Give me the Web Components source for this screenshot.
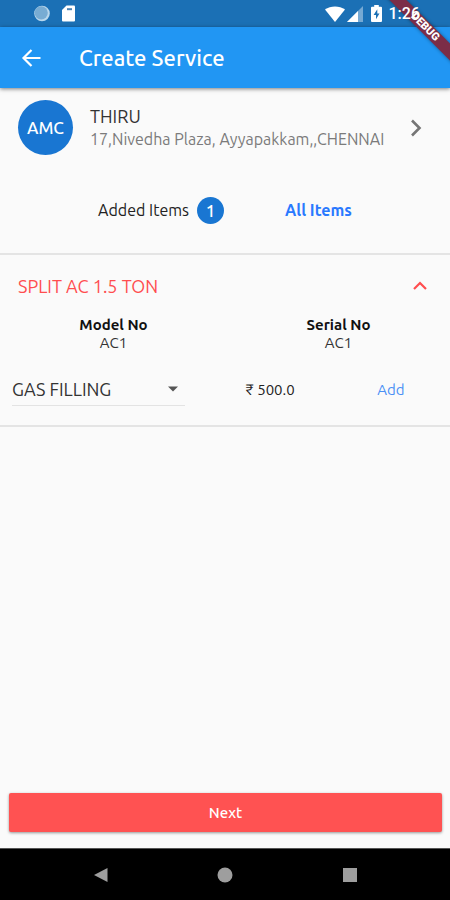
<!DOCTYPE html>
<html lang="en">
<head>
<meta charset="utf-8">
<meta name="viewport" content="width=device-width, initial-scale=1">
<title>Create Service</title>
<style>
  html, body { margin: 0; }
  body { font-family: Ubuntu, "Noto Sans", sans-serif; color: #222; background: #fafafa; }
</style>
</head>
<body>
<service-screen></service-screen>
<script>
const define = (name, html) => {
  const template = document.createElement('template');
  template.innerHTML = `<style>
    *, *::before, *::after { box-sizing: border-box; }
    :host { box-sizing: border-box; white-space: nowrap; }
    button, select, a { font: inherit; color: inherit; background: none; border: 0; padding: 0; margin: 0; text-decoration: none; cursor: pointer; }
    svg { display: block; }
  </style>` + html;
  customElements.define(name, class extends HTMLElement {
    constructor() {
      super();
      this.attachShadow({ mode: 'open' }).append(template.content.cloneNode(true));
    }
  });
};

define('status-bar', `<style>
  :host { display: flex; align-items: center; height: 27px; padding: 0 30px 0 34px; background: #1b70b5; color: #fff; font: 500 16px/20px Roboto, sans-serif; }
  .gap { flex: 1; }
  .sd { margin-left: 12px; }
  .bat { margin: 0 7px 0 8px; }
  .sig { margin-left: 2px; }
  .time { position: relative; z-index: 2; }
</style>
<svg width="16" height="17" viewBox="0 0 16 17"><circle cx="8" cy="8.5" r="7.8" fill="#b9d7ec"/><circle cx="7.2" cy="7.8" r="6.6" fill="#78acd3"/></svg>
<svg class="sd" width="13" height="17" viewBox="0 0 13 17"><path d="M4.5.5H12a1 1 0 0 1 1 1v14a1 1 0 0 1-1 1H1a1 1 0 0 1-1-1V5z" fill="#fff"/><path d="M5 3.2h5v2H5z" fill="#4a83b5"/></svg>
<span class="gap"></span>
<svg width="20" height="16" viewBox="0 0 20 16"><path d="M0 3.6C5.600-.7 14.400-.7 20 3.600L10 16z" fill="#fff"/></svg>
<svg class="sig" width="16" height="16" viewBox="0 0 16 16"><path d="M16 0V16H0z" fill="#76a9d3"/><path d="M11 5V16H0z" fill="#fff"/></svg>
<svg class="bat" width="11" height="17" viewBox="0 0 11 17"><path d="M3.200 0h4.600v1.800H10a1 1 0 0 1 1 1V16a1 1 0 0 1-1 1H1a1 1 0 0 1-1-1V2.800a1 1 0 0 1 1-1h2.200z" fill="#fff"/><path d="M6.300 4.300 2.600 10H5v4.300L8.500 8.500H6.300z" fill="#1b70b5"/></svg>
<span class="time"><slot></slot></span>`);

define('debug-ribbon', `<style>
  :host { position: absolute; top: 0; right: 0; width: 70px; height: 70px; overflow: hidden; pointer-events: none; }
  span { position: absolute; left: -15px; top: 21px; width: 120px; height: 12px; transform: rotate(45deg); text-align: center; background: #7b2d47; box-shadow: 0 0 4px rgba(0,0,0,.4); color: #fff; font: 900 11px/12px Roboto, sans-serif; }
</style><span><slot></slot></span>`);

define('app-bar', `<style>
  :host { display: flex; align-items: center; gap: 37px; height: 61px; padding: 0 20px; background: #2196f3; color: #fff; box-shadow: 0 1px 4px rgba(0,0,0,.5); }
  h1 { margin: 0; font-size: 22px; line-height: 28px; font-weight: 500; }
</style>
<button aria-label="Back"><svg width="22" height="20" viewBox="0 0 22 20" fill="none" stroke="#fff" stroke-width="2.200"><path d="M20.500 10H4M11.500 2 3.500 10l8 8"/></svg></button>
<h1><slot></slot></h1>`);

define('customer-row', `<style>
  :host { display: flex; align-items: center; gap: 17px; padding: 12px 24px 12px 18px; }
  .avatar { flex: none; display: grid; place-items: center; width: 55px; height: 55px; border-radius: 50%; background: #1976d2; color: #fff; font-size: 17px; font-weight: 500; }
  .text { flex: 1; min-width: 0; }
  .name { font-size: 18px; line-height: 23px; color: #333; }
  .addr { font-size: 16px; line-height: 22px; color: #7b7b7b; }
</style>
<div class="avatar"><slot name="tag"></slot></div>
<div class="text"><div class="name"><slot name="name"></slot></div><div class="addr"><slot></slot></div></div>
<button aria-label="Open customer"><svg width="20" height="20" viewBox="0 0 20 20" fill="none" stroke="#757575" stroke-width="2.600"><path d="m6 2.500 7.500 7.500L6 17.500"/></svg></button>`);

define('item-tabs', `<style>
  :host { display: grid; grid-template-columns: 1fr 1fr; align-items: center; padding: 30px 32px 29px; border-bottom: 2px solid #e4e4e4; font-size: 16px; line-height: 27px; }
  button { display: flex; align-items: center; justify-content: center; gap: 8px; }
  .added { justify-content: end; padding-right: 1px; }
  .all { color: #2979ff; font-weight: 700; padding-right: 6px; }
  .badge { width: 27px; height: 27px; border-radius: 50%; background: #1976d2; color: #fff; font-size: 17px; font-weight: 500; text-align: center; }
</style>
<button class="added"><slot name="added"></slot><span class="badge"><slot name="count"></slot></span></button>
<button class="all"><slot name="all"></slot></button>`);

define('service-item', `<style>
  :host { display: block; padding: 19px 0 19px; border-bottom: 2px solid #e4e4e4; }
  header { display: flex; align-items: center; justify-content: space-between; padding: 0 22px 0 18px; color: #ff4d4f; }
  h2 { margin: 0; font-size: 18px; line-height: 24px; font-weight: 400; }
  dl { display: grid; grid-template-columns: 1fr 1fr; margin: 18px 0 0; text-align: center; font-size: 15px; line-height: 18px; color: #333; }
  dt { font-weight: 700; color: #111; }
  dd { margin: 0; }
  .serial, .model { padding-left: 2px; }
  .row { display: grid; grid-template-columns: 173fr 170fr 72fr; align-items: center; margin-top: 20px; padding: 0 23px 0 12px; font-size: 15px; }
  .pick { display: grid; align-items: center; border-bottom: 1px solid #e3e3e3; font-size: 18px; }
  .pick > * { grid-area: 1 / 1; }
  select { appearance: none; width: 100%; height: 33px; color: #333; }
  .pick svg { justify-self: end; margin-right: 7px; pointer-events: none; }
  .price { text-align: center; }
  .add { color: #4a90f5; }
</style>
<header><h2><slot name="title"></slot></h2><button aria-label="Collapse"><svg width="16" height="12" viewBox="0 0 16 12" fill="none" stroke="#ff4d4f" stroke-width="2.200"><path d="m2 9 6-6 6 6"/></svg></button></header>
<dl>
  <div class="model"><dt>Model No</dt><dd><slot name="model"></slot></dd></div>
  <div class="serial"><dt>Serial No</dt><dd><slot name="serial"></slot></dd></div>
</dl>
<div class="row">
  <div class="pick"><select aria-label="Service type"><option>GAS FILLING</option></select>
  <svg width="10" height="6" viewBox="0 0 10 6"><path d="M0 .5h10L5 5.500z" fill="#555"/></svg></div>
  <span class="price"><slot name="price"></slot></span>
  <button class="add">Add</button>
</div>`);

define('primary-button', `<style>
  :host { display: block; padding: 0 8px 16px 9px; }
  button { width: 100%; height: 39px; border-radius: 2px; background: #ff5252; color: #fff; font-size: 15px; font-weight: 500; box-shadow: 0 1px 3px rgba(0,0,0,.4); }
</style><button><slot></slot></button>`);

define('nav-bar', `<style>
  :host { display: flex; align-items: center; justify-content: space-between; height: 52px; padding: 0 92px; background: #000; border-top: 1px solid #555; }
  button { display: block; }
</style>
<button aria-label="Back"><svg width="16" height="16" viewBox="0 0 16 16"><path d="M15.500 1v14L2 8z" fill="#9e9e9e"/></svg></button>
<button aria-label="Home"><svg width="16" height="16" viewBox="0 0 16 16"><circle cx="8" cy="8" r="7.500" fill="#9e9e9e"/></svg></button>
<button aria-label="Recent apps"><svg width="16" height="16" viewBox="0 0 16 16"><path d="M1 1h14v14H1z" fill="#9e9e9e"/></svg></button>`);

define('service-screen', `<style>
  :host { position: relative; display: flex; flex-direction: column; min-height: 100vh; overflow: hidden; }
  main { flex: 1; }
</style>
<status-bar>1:26</status-bar>
<app-bar>Create Service</app-bar>
<main>
  <customer-row><span slot="tag">AMC</span><span slot="name">THIRU</span>17,Nivedha Plaza, Ayyapakkam,,CHENNAI</customer-row>
  <item-tabs><span slot="added">Added Items</span><span slot="count">1</span><span slot="all">All Items</span></item-tabs>
  <service-item><span slot="title">SPLIT AC 1.5 TON</span><span slot="model">AC1</span><span slot="serial">AC1</span><span slot="price">₹ 500.0</span></service-item>
</main>
<primary-button>Next</primary-button>
<nav-bar></nav-bar>
<debug-ribbon>DEBUG</debug-ribbon>`);
</script>
</body>
</html>
